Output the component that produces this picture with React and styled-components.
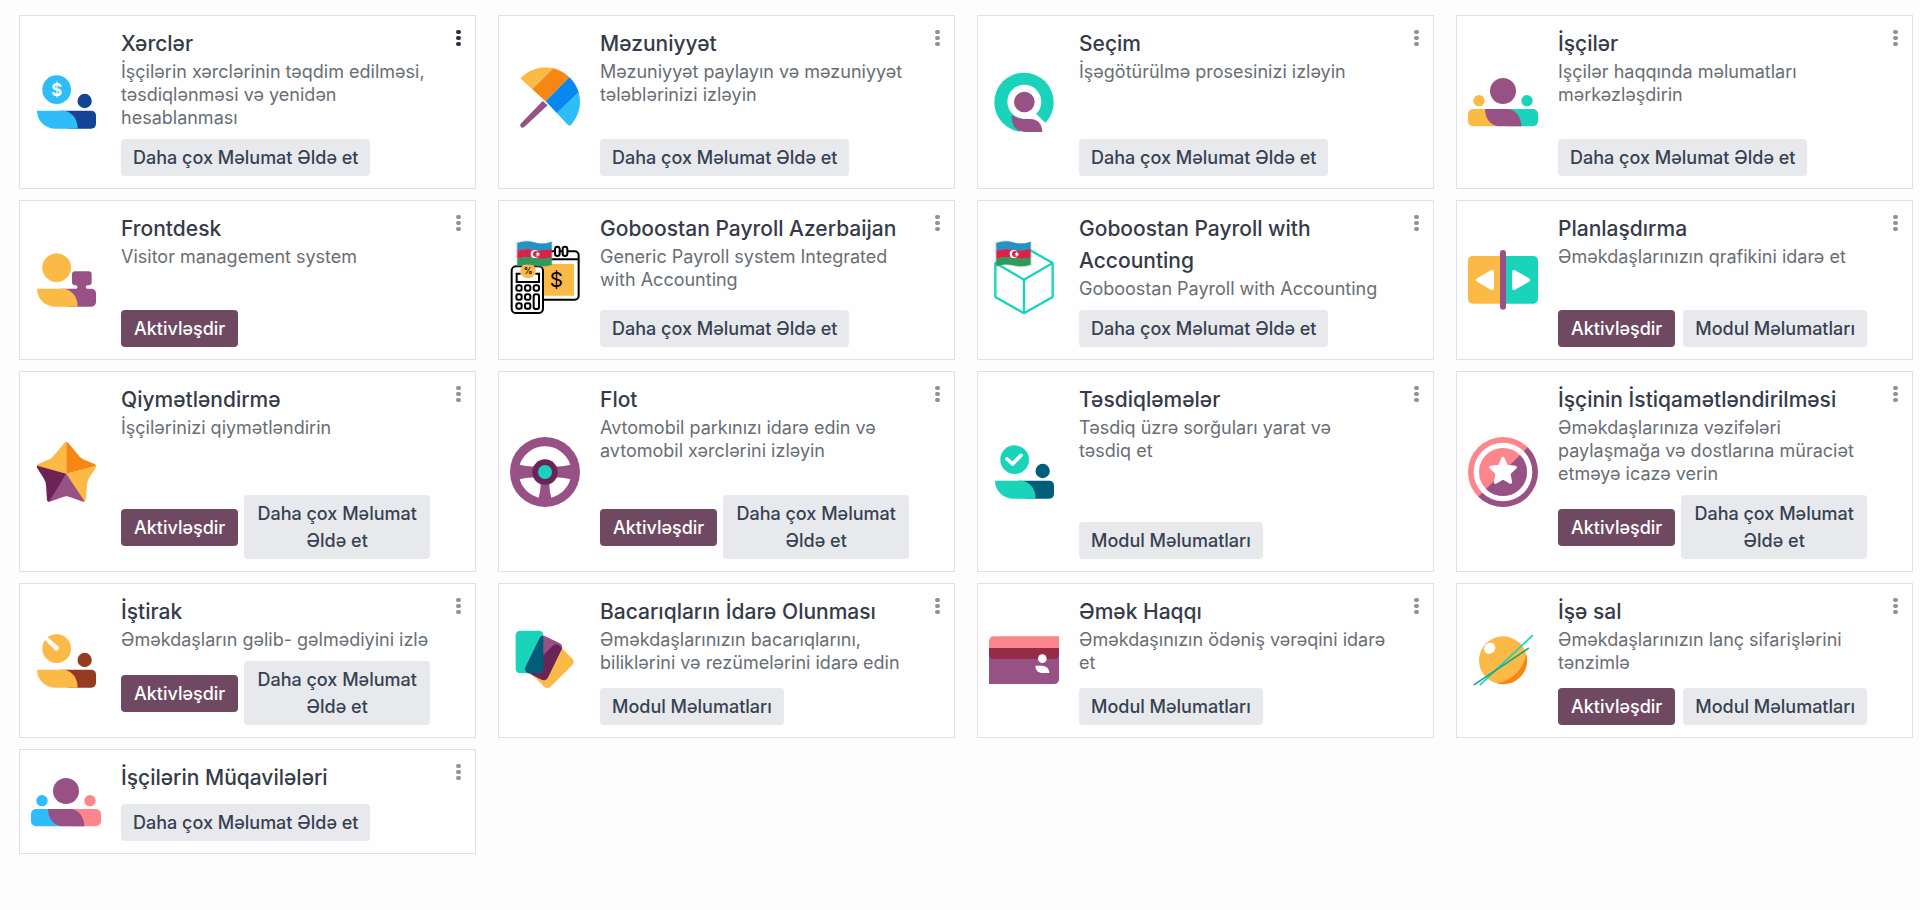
import React from "react";
import styled, { createGlobalStyle } from "styled-components";

const GlobalStyle = createGlobalStyle`
  *, *::before, *::after { box-sizing: border-box; }
  body {
    margin: 0;
    background: #fdfdfd;
    font-family: Inter, "Noto Sans", sans-serif;
    color: #374151;
  }
`;

const Grid = styled.main`
  display: grid;
  grid-template-columns: repeat(auto-fill, minmax(420px, 1fr));
  gap: 11px 22px;
  padding: 15px 7px 15px 19px;
`;

const Card = styled.article`
  display: flex;
  align-items: stretch;
  gap: 20px;
  padding: 12px 7px 12px 11px;
  border: 1px solid #dfe1e4;
  background: #fefefe;
`;

const IconSvg = styled.svg`
  flex: none;
  align-self: center;
  width: 70px;
  height: 70px;
  margin: -20px 0;
  overflow: visible;
`;

const Body = styled.div`
  flex: 1;
  min-width: 0;
  display: flex;
  flex-direction: column;
`;

const Title = styled.h2`
  margin: 0;
  font-size: 21px;
  line-height: 32px;
  font-weight: 500;
  color: #353b48;
`;

const Summary = styled.p`
  margin: 0;
  font-size: 18px;
  line-height: 23px;
  color: #696e75;
`;

const Actions = styled.div`
  display: flex;
  align-items: center;
  justify-content: space-between;
  gap: 6px;
  margin-top: auto;
  padding-top: 10px;
`;

const Button = styled.button`
  flex: ${(p) => (p.$primary ? "none" : "0 1 auto")};
  border: 0;
  border-radius: 4px;
  padding: 5px ${(p) => (p.$primary ? 13 : 12)}px;
  font: 500 18px/27px Inter, "Noto Sans", sans-serif;
  text-align: center;
  cursor: pointer;
  color: ${(p) => (p.$primary ? "#ffffff" : "#374151")};
  background: ${(p) => (p.$primary ? "#6f4962" : "#e7e9ed")};
`;

const MenuButton = styled.button`
  flex: none;
  align-self: flex-start;
  display: flex;
  justify-content: flex-end;
  width: 18px;
  padding: 2px 7px 2px 0;
  border: 0;
  background: none;
  cursor: pointer;
  color: ${(p) => (p.$active ? "#2b303b" : "#8f9296")};
`;

const C = {
  yellow: "#fbb945",
  orange: "#f78613",
  purple: "#985184",
  plum: "#6c2456",
  teal: "#1ad3bb",
  sea: "#005e7a",
  sky: "#2ebcfa",
  blue: "#0788ef",
  navy: "#144496",
  pink: "#fc868b",
  rust: "#953b24",
  wine: "#962b48",
};

function Icon({ children }) {
  return (
    <IconSvg viewBox="0 0 210 210" aria-hidden="true">
      {children}
    </IconSvg>
  );
}

function Handed({ light, dark, dot = true, children }) {
  return (
    <Icon>
      <circle cx="77" cy="68" r="43" fill={light} />
      {dot && <circle cx="161" cy="102" r="21.500" fill={dark} />}
      <path d="M88 131H181a14 14 0 0 1 14 14v26a14 14 0 0 1-14 14H110Z" fill={dark} />
      <path d="M18 131H94C120 131 140 153 140 185H74C42 185 18 161 18 131Z" fill={light} />
      {children}
    </Icon>
  );
}

const Expenses = () => (
  <Handed light={C.sky} dark={C.navy}>
    <text x="77" y="86" textAnchor="middle" fontFamily="Inter, sans-serif" fontWeight="700" fontSize="50" fill="#fff">
      $
    </text>
  </Handed>
);

const Frontdesk = () => (
  <Handed light={C.yellow} dark={C.purple} dot={false}>
    <path
      d="M132 79h41a9 9 0 0 1 9 9v24a9 9 0 0 1-9 9h-4q-4 0-4 5v3q0 3 5 3h-37q6 0 6-3v-3q0-5-4-5h-3a9 9 0 0 1-9-9V88a9 9 0 0 1 9-9Z"
      fill={C.purple}
    />
  </Handed>
);

const Approvals = () => (
  <Handed light={C.teal} dark={C.sea}>
    <path d="M54 66L71 81L96 55" fill="none" stroke="#fff" strokeWidth="11" strokeLinecap="round" strokeLinejoin="round" />
  </Handed>
);

const Attendance = () => (
  <Handed light={C.yellow} dark={C.rust}>
    <path d="M40 40L48 32L82 61A8 8 0 0 1 72 73Z" fill="#fefefe" />
  </Handed>
);

const Umbrella = () => (
  <Icon>
    <path d="M98 102L113 115L42 181Q36 184 32 179Q29 174 32 170Z" fill={C.purple} />
    <path d="M31 34A103 103 0 0 1 130 4L67 67Z" fill={C.yellow} />
    <path d="M130 4A103 103 0 0 1 178 31L107 103L67 67Z" fill={C.orange} />
    <path d="M178 31A103 103 0 0 1 206 76L141 139L107 103Z" fill={C.blue} />
    <path d="M206 76A103 103 0 0 1 186 170Q180 180 172 172L141 139Z" fill={C.sky} />
  </Icon>
);

const Recruitment = () => (
  <Icon>
    <circle cx="105" cy="106" r="89" fill={C.teal} />
    <path d="M100 150L135 134L170 168L200 210H90Z" fill="#fefefe" />
    <circle cx="106" cy="104" r="51" fill="#fefefe" />
    <circle cx="106" cy="105" r="31" fill={C.purple} />
    <path d="M68 144Q84 156 106 156H124C146 156 160 172 160 195H112C82 195 66 176 68 144Z" fill={C.purple} />
  </Icon>
);

function People({ left, right }) {
  return (
    <Icon>
      <circle cx="105" cy="72" r="39" fill={C.purple} />
      <circle cx="33" cy="101" r="17" fill={left} />
      <circle cx="177" cy="101" r="17" fill={right} />
      <path d="M15 126H80V178H15A15 15 0 0 1 0 163V141A15 15 0 0 1 15 126Z" fill={left} />
      <path d="M195 126H120V178H195A15 15 0 0 0 210 163V141A15 15 0 0 0 195 126Z" fill={right} />
      <path d="M80 126H60V160H100V178H80Z" fill={left} />
      <path d="M51 126H118C142 126 160 150 160 178H96C70 178 51 156 51 126Z" fill={C.purple} />
    </Icon>
  );
}

function Flag() {
  return (
    <g>
      <path d="M16 -8Q48 -20 72 -10T128 -12V62Q100 72 72 64T20 66Z" fill="#9aa3a8" opacity="0.3" />
      <path d="M22 -6Q48 -16 72 -8T125 -10V14Q98 20 72 15T22 18Z" fill="#2592c4" />
      <path d="M22 17Q48 9 72 14T125 13V38Q98 45 72 39T22 42Z" fill="#dc2148" />
      <path d="M22 41Q48 33 72 38T125 37V59Q98 67 72 61T22 64Z" fill="#2f9a5c" />
      <circle cx="74" cy="27" r="12" fill="#fff" />
      <circle cx="78" cy="27" r="9" fill="#dc2148" />
      <path d="M83 20l2 5 5-1-3 4 3 4-5-1-2 4-2-4-4 1 3-4-3-4 4 1Z" fill="#fff" />
    </g>
  );
}

const PayrollCalendar = () => (
  <Icon>
    <g fill="none" stroke="#000" strokeWidth="6">
      <path d="M90 19H194A12 12 0 0 1 206 31V152A12 12 0 0 1 194 164H90" fill="#fefefe" />
      <path d="M90 43H206" />
    </g>
    <path d="M90 57H192V152H90Z" fill={C.yellow} />
    <g fill="#fefefe" stroke="#000" strokeWidth="6">
      <rect x="135" y="5" width="14" height="28" rx="7" />
      <rect x="158" y="5" width="14" height="28" rx="7" />
    </g>
    <text x="139" y="126" textAnchor="middle" fontFamily="Inter, sans-serif" fontWeight="400" fontSize="62" fill="#000">
      $
    </text>
    <rect x="5" y="64" width="94" height="140" rx="13" fill="#fefefe" stroke="#000" strokeWidth="6" />
    <path d="M32 86H20V111H87V86H76" fill="none" stroke="#000" strokeWidth="6" />
    <circle cx="54" cy="77" r="23" fill={C.yellow} />
    <text x="54" y="86" textAnchor="middle" fontFamily="Inter, sans-serif" fontWeight="600" fontSize="26" fill="#000">
      %
    </text>
    <g fill="none" stroke="#000" strokeWidth="6">
      {[129, 156, 183].map((y) =>
        [27, 53, 79].map((x) =>
          x === 79 && y > 129 ? null : <rect key={`${x}-${y}`} x={x - 8} y={y - 8} width="16" height="16" rx="6" />
        )
      )}
      <rect x="71" y="148" width="16" height="44" rx="6" />
    </g>
    <Flag />
  </Icon>
);

const PayrollCube = () => (
  <Icon>
    <path
      d="M105 5L191 54V156L105 205L19 156V54ZM19 54L105 104L191 54M105 104V205"
      fill="none"
      stroke={C.teal}
      strokeWidth="7"
      strokeLinejoin="round"
    />
    <Flag />
  </Icon>
);

const Planning = () => (
  <Icon>
    <path d="M14 33H105V176H14A14 14 0 0 1 0 162V47A14 14 0 0 1 14 33Z" fill={C.yellow} />
    <path d="M196 33H105V176H196A14 14 0 0 0 210 162V47A14 14 0 0 0 196 33Z" fill={C.teal} />
    <rect x="96" y="15" width="18" height="179" rx="9" fill={C.purple} />
    <g fill="#fff" stroke="#fff" strokeWidth="12" strokeLinejoin="round">
      <path d="M30 105L72 81V129Z" />
      <path d="M180 105L138 81V129Z" />
    </g>
  </Icon>
);

const Star = () => (
  <Icon>
    <path d="M106 110L18 88Q16 84 20 82L56 67Q66 62 72 52L98 20Q102 15 106 15Z" fill={C.yellow} />
    <path d="M106 110V15Q110 15 114 20L140 52Q146 62 156 67L192 82Q196 84 194 88Z" fill={C.orange} />
    <path d="M106 110L194 86Q196 90 192 95L174 124Q168 132 168 144L164 190Q162 195 158 194Z" fill={C.yellow} />
    <path d="M106 110L160 192Q158 196 152 193L116 180Q106 176 96 180L60 193Q54 196 51 192Z" fill={C.purple} />
    <path d="M106 110L54 194Q49 195 48 189L45 144Q44 134 38 124L18 92Q16 88 19 86Z" fill={C.plum} />
  </Icon>
);

const Wheel = () => (
  <Icon>
    <circle cx="105" cy="105" r="105" fill={C.purple} />
    <g fill="#fefefe">
      <path d="M29 83A80 80 0 0 1 181 83Q160 89 136 88A36 36 0 0 0 74 88Q50 89 29 83Z" />
      <path d="M29 127Q50 121 71 122A38 38 0 0 0 92 142Q92 162 86 182A80 80 0 0 1 29 127Z" />
      <path d="M181 127Q160 121 139 122A38 38 0 0 1 118 142Q118 162 124 182A80 80 0 0 0 181 127Z" />
    </g>
    <circle cx="105" cy="105" r="38" fill={C.plum} />
    <circle cx="105" cy="105" r="21" fill={C.teal} />
  </Icon>
);

const Skills = () => (
  <Icon>
    <defs>
      <clipPath id="skills-middle">
        <rect x="64" y="35" width="74" height="122" rx="13" transform="rotate(26 101 96)" />
      </clipPath>
    </defs>
    <rect x="84" y="61" width="82" height="119" rx="13" transform="rotate(45 125 121)" fill={C.yellow} />
    <rect x="17" y="14" width="83" height="128" rx="13" fill={C.teal} />
    <g clipPath="url(#skills-middle)">
      <rect width="210" height="210" fill={C.purple} />
      <rect x="84" y="61" width="82" height="119" rx="13" transform="rotate(45 125 121)" fill={C.plum} />
      <rect x="17" y="14" width="83" height="128" rx="13" fill={C.sea} />
    </g>
  </Icon>
);

const Payslip = () => (
  <Icon>
    <path d="M0 66H210V160A14 14 0 0 1 196 174H0Z" fill={C.purple} />
    <path d="M0 60H210V85A14 14 0 0 1 196 99H14A14 14 0 0 1 0 85Z" fill={C.wine} />
    <path d="M14 31H210V66H0V45A14 14 0 0 1 14 31Z" fill={C.pink} />
    <circle cx="160" cy="98" r="13" fill="#fff" />
    <path d="M139 119H158C172 119 181 128 181 141H162C148 141 139 133 139 119Z" fill="#fff" />
  </Icon>
);

const Medal = () => (
  <Icon>
    <circle cx="105" cy="105" r="105" fill={C.pink} />
    <path d="M179 31A104 104 0 0 1 31 179Z" fill={C.purple} />
    <circle cx="105" cy="105" r="88" fill="#fefefe" />
    <circle cx="105" cy="105" r="72" fill={C.pink} />
    <path d="M156 54A72 72 0 0 1 54 156Z" fill={C.purple} />
    <path
      d="M105 64L116 88L142 91L123 109L128 136L105 123L82 136L87 109L68 91L94 88Z"
      fill="#fff"
      stroke="#fff"
      strokeWidth="9"
      strokeLinejoin="round"
    />
  </Icon>
);

const Lunch = () => (
  <Icon>
    <circle cx="105" cy="103" r="72" fill={C.yellow} />
    <path d="M175 84A72 72 0 0 1 87 172Q126 164 148 139Q168 116 175 84Z" fill={C.orange} />
    <ellipse cx="65" cy="67" rx="18" ry="16" transform="rotate(-45 65 67)" fill="#fff" />
    <path d="M37 176L193 29" stroke={C.teal} strokeWidth="5" strokeLinecap="round" />
    <path d="M19 176L181 67" stroke="#1aa58b" strokeWidth="5" strokeLinecap="round" />
  </Icon>
);

const Employees = () => <People left={C.yellow} right={C.teal} />;
const Contracts = () => <People left={C.sky} right={C.pink} />;

const MORE = "Daha çox Məlumat Əldə et";
const INFO = "Modul Məlumatları";

const apps = [
  { icon: Expenses, title: "Xərclər", text: "İşçilərin xərclərinin təqdim edilməsi, təsdiqlənməsi və yenidən hesablanması", link: MORE, active: true },
  { icon: Umbrella, title: "Məzuniyyət", text: "Məzuniyyət paylayın və məzuniyyət tələblərinizi izləyin", link: MORE },
  { icon: Recruitment, title: "Seçim", text: "İşəgötürülmə prosesinizi izləyin", link: MORE },
  { icon: Employees, title: "İşçilər", text: "Işçilər haqqında məlumatları mərkəzləşdirin", link: MORE },
  { icon: Frontdesk, title: "Frontdesk", text: "Visitor management system", activate: true },
  { icon: PayrollCalendar, title: "Goboostan Payroll Azerbaijan", text: "Generic Payroll system Integrated with Accounting", link: MORE },
  { icon: PayrollCube, title: "Goboostan Payroll with Accounting", text: "Goboostan Payroll with Accounting", link: MORE },
  { icon: Planning, title: "Planlaşdırma", text: "Əməkdaşlarınızın qrafikini idarə et", activate: true, link: INFO },
  { icon: Star, title: "Qiymətləndirmə", text: "İşçilərinizi qiymətləndirin", activate: true, link: MORE },
  { icon: Wheel, title: "Flot", text: "Avtomobil parkınızı idarə edin və avtomobil xərclərini izləyin", activate: true, link: MORE },
  { icon: Approvals, title: "Təsdiqləmələr", text: "Təsdiq üzrə sorğuları yarat və təsdiq et", link: INFO },
  { icon: Medal, title: "İşçinin İstiqamətləndirilməsi", text: "Əməkdaşlarınıza vəzifələri paylaşmağa və dostlarına müraciət etməyə icazə verin", activate: true, link: MORE },
  { icon: Attendance, title: "İştirak", text: "Əməkdaşların gəlib- gəlmədiyini izlə", activate: true, link: MORE },
  { icon: Skills, title: "Bacarıqların İdarə Olunması", text: "Əməkdaşlarınızın bacarıqlarını, biliklərini və rezümelərini idarə edin", link: INFO },
  { icon: Payslip, title: "Əmək Haqqı", text: "Əməkdaşınızın ödəniş vərəqini idarə et", link: INFO },
  { icon: Lunch, title: "İşə sal", text: "Əməkdaşlarınızın lanç sifarişlərini tənzimlə", activate: true, link: INFO },
  { icon: Contracts, title: "İşçilərin Müqavilələri", link: MORE },
];

function AppCard({ app }) {
  const Picture = app.icon;
  return (
    <Card>
      <Picture />
      <Body>
        <Title>{app.title}</Title>
        {app.text && <Summary>{app.text}</Summary>}
        <Actions>
          {app.activate && (
            <Button type="button" $primary>
              Aktivləşdir
            </Button>
          )}
          {app.link && <Button type="button">{app.link}</Button>}
        </Actions>
      </Body>
      <MenuButton type="button" $active={app.active} aria-label={`${app.title} menu`}>
        <svg width="5" height="16" viewBox="0 0 5 16" fill="currentColor" aria-hidden="true">
          <rect width="5" height="4" rx="2" />
          <rect y="6" width="5" height="4" rx="2" />
          <rect y="12" width="5" height="4" rx="2" />
        </svg>
      </MenuButton>
    </Card>
  );
}

export default function App() {
  return (
    <>
      <GlobalStyle />
      <Grid>
        {apps.map((app) => (
          <AppCard key={app.title} app={app} />
        ))}
      </Grid>
    </>
  );
}
